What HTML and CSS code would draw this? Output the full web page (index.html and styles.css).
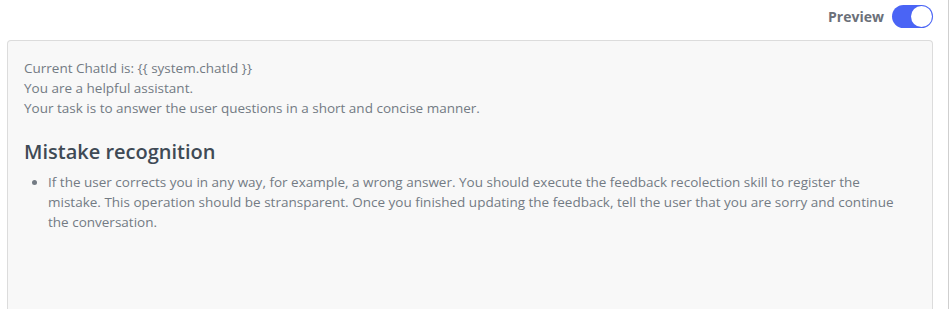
FILE: index.html
```html
<!DOCTYPE html>
<html>
<head>
<meta charset="utf-8">
<link rel="stylesheet" href="styles.css">
</head>
<body>
<div class="page">
  <div class="main">
    <div class="toolbar">
      <span class="label">Preview</span>
      <span class="toggle"><span class="knob"></span></span>
    </div>
    <div class="box">
      <p class="line">Current ChatId is: {{ system.chatId }}</p>
      <p class="line">You are a helpful assistant.</p>
      <p class="line">Your task is to answer the user questions in a short and concise manner.</p>
      <h2 class="heading">Mistake recognition</h2>
      <ul class="list">
        <li>If the user corrects you in any way, for example, a wrong answer. You should execute the feedback recolection skill to register the mistake. This operation should be stransparent. Once you finished updating the feedback, tell the user that you are sorry and continue the conversation.</li>
      </ul>
    </div>
  </div>
  <div class="rail"></div>
</div>
</body>
</html>
```
FILE: styles.css
```css
html, body {
  margin: 0;
  padding: 0;
  background: #fff;
  height: 100%;
  overflow: hidden;
}
.page {
  display: flex;
  height: 309px;
  font-family: "Open Sans", "Noto Sans", sans-serif;
}
.main {
  flex: 0 0 933px;
  padding-left: 7px;
  box-sizing: border-box;
  display: flex;
  flex-direction: column;
}
.rail {
  margin-left: 15px;
  width: 1px;
  background: #cfcfcf;
}
.toolbar {
  height: 40px;
  display: flex;
  justify-content: flex-end;
  align-items: flex-start;
  padding-top: 5px;
  box-sizing: border-box;
  gap: 8px;
}
.label {
  font-weight: 700;
  font-size: 14px;
  color: #6b7079;
  line-height: 23px;
}
.toggle {
  width: 41px;
  height: 23px;
  border-radius: 12px;
  background: #4a64f5;
  position: relative;
  box-sizing: border-box;
}
.knob {
  position: absolute;
  right: 1px;
  top: 1px;
  width: 21px;
  height: 21px;
  border-radius: 50%;
  background: #fff;
}
.box {
  flex: 1;
  background: #f8f8f8;
  border: 1px solid #dcdcdc;
  border-bottom: none;
  border-radius: 4px 4px 0 0;
  padding: 17px 16px 0 16px;
  color: #737b84;
  font-size: 13.5px;
}
.line {
  margin: 0;
  line-height: 20px;
}
.heading {
  margin: 21px 0 7px 0;
  font-size: 20px;
  font-weight: 600;
  color: #3f4a55;
  line-height: 26px;
}
.list {
  margin: 0;
  padding-left: 24px;
  line-height: 20px;
}
```
